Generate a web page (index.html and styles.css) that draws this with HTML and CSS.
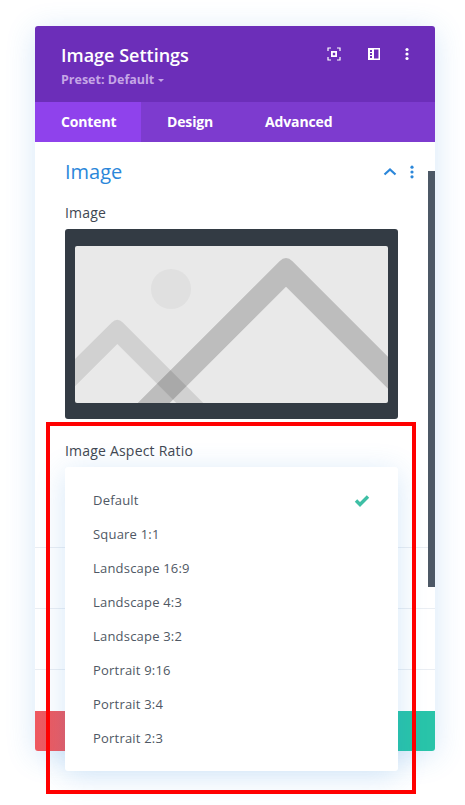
FILE: index.html
```html
<!DOCTYPE html>
<html lang="en">
<head>
<meta charset="utf-8">
<title>Image Settings</title>
<link rel="stylesheet" href="styles.css">
</head>
<body>
<div class="modal">
  <header class="head">
    <div class="head-text">
      <div class="title">Image Settings</div>
      <div class="preset">Preset: Default <span class="caret"></span></div>
    </div>
    <div class="head-icons">
      <svg class="ico" width="14" height="14" viewBox="0 0 14 14"><path d="M1 4V1h3M10 1h3v3M13 10v3h-3M4 13H1v-3" fill="none" stroke="#fff" stroke-width="1.2"/><path fill-rule="evenodd" d="M4 4h6v6H4zM5.800 5.800v2.400h2.400V5.800z" fill="#fff"/></svg>
      <svg class="ico" width="14" height="14" viewBox="0 0 14 14"><path fill-rule="evenodd" d="M1 1h12v12H1zM7 2.500v9h4.500v-9zM3 3v2h2V3zM3 6v2h2V6zM3 9v2h2V9z" fill="#fff"/></svg>
      <svg class="ico ico-more" width="14" height="14" viewBox="0 0 14 14"><circle cx="7" cy="2.500" r="1.600" fill="#fff"/><circle cx="7" cy="7" r="1.600" fill="#fff"/><circle cx="7" cy="11.500" r="1.600" fill="#fff"/></svg>
    </div>
  </header>
  <nav class="tabs">
    <div class="tab active">Content</div>
    <div class="tab">Design</div>
    <div class="tab">Advanced</div>
  </nav>
  <main class="body">
    <div class="scroll"></div>
    <section class="sec sec-image">
      <div class="sec-head">
        <h2 class="sec-title">Image</h2>
        <svg class="chev" width="14" height="10" viewBox="0 0 14 10"><path d="M1.500 7.500 7 2.500l5.500 5" fill="none" stroke="#2b87da" stroke-width="2.200"/></svg>
        <svg class="dots" width="6" height="14" viewBox="0 0 6 14"><circle cx="3" cy="2.200" r="1.600" fill="#2b87da"/><circle cx="3" cy="7" r="1.600" fill="#2b87da"/><circle cx="3" cy="11.800" r="1.600" fill="#2b87da"/></svg>
      </div>
      <div class="label">Image</div>
      <div class="thumb">
        <svg class="pic" width="313" height="157" viewBox="0 0 313 157">
          <rect width="313" height="157" fill="#e9e9e9"/>
          <circle cx="96" cy="43" r="20" fill="#e0e0e0"/>
          <path d="M0 113 36.800 76.500Q42.300 71 47.800 76.500L128.300 157H101.300L42.300 98 0 140.300Z" fill="#000" fill-opacity=".1"/>
          <path d="M62.700 157 204.500 15.200Q211 8.700 217.500 15.200L313 110.700V142.700L211 40.700 94.700 157Z" fill="#000" fill-opacity=".19"/>
        </svg>
      </div>
    </section>
    <section class="sec sec-row"></section>
    <section class="sec sec-row"></section>
    <section class="sec sec-last"></section>
  </main>
  <footer class="foot">
    <div class="btn red"></div>
    <div class="btn gray"></div>
    <div class="btn green"></div>
  </footer>
</div>
<div class="aspect">
  <div class="label aspect-label">Image Aspect Ratio</div>
  <ul class="menu">
    <li class="opt">Default<svg class="check" width="16" height="13" viewBox="0 0 16 13"><path d="M2 6.500 6 10.500 14 2.500" fill="none" stroke="#3ebfa5" stroke-width="3.400"/></svg></li>
    <li class="opt">Square 1:1</li>
    <li class="opt">Landscape 16:9</li>
    <li class="opt">Landscape 4:3</li>
    <li class="opt">Landscape 3:2</li>
    <li class="opt">Portrait 9:16</li>
    <li class="opt">Portrait 3:4</li>
    <li class="opt">Portrait 2:3</li>
  </ul>
</div>
<div class="mark"></div>
</body>
</html>
```

FILE: styles.css
```css
* { box-sizing: border-box; }
html, body { height: 100%; }
body {
  margin: 0;
  background: #fff;
  font-family: "Open Sans", sans-serif;
  position: relative;
  overflow: hidden;
}
.modal {
  position: absolute;
  left: 35px;
  top: 26px;
  width: 400px;
  height: 725px;
  display: flex;
  flex-direction: column;
  border-radius: 3px;
  background: #fff;
  box-shadow: 0 5px 30px rgba(43, 135, 218, .2);
}
.head {
  height: 76px;
  flex: none;
  background: #6c2eb9;
  border-radius: 3px 3px 0 0;
  padding: 17px 20px 0 26px;
  display: flex;
  justify-content: space-between;
}
.title {
  font-size: 18px;
  font-weight: 600;
  line-height: 24px;
  color: #fff;
}
.preset {
  margin-top: 4px;
  font-size: 12.500px;
  font-weight: 700;
  line-height: 18px;
  color: #c5a6e6;
  display: flex;
  align-items: center;
  gap: 4px;
}
.caret {
  width: 0;
  height: 0;
  border: 3px solid transparent;
  border-top: 3px solid #c5a6e6;
  border-bottom: 0;
}
.head-icons {
  display: flex;
  gap: 26px;
  padding-top: 4px;
  padding-right: 1px;
}
.ico-more { margin-left: -7px; }
.tabs {
  height: 40px;
  flex: none;
  display: flex;
  background: #7d3bcf;
}
.tab {
  padding: 0 26px;
  font-size: 14px;
  font-weight: 700;
  letter-spacing: -.15px;
  line-height: 40px;
  color: #fff;
}
.tab.active { background: #8f42ec; width: 106px; }
.body {
  flex: 1;
  position: relative;
  display: flex;
  flex-direction: column;
  min-height: 0;
}
.scroll {
  position: absolute;
  right: 0;
  top: 29px;
  width: 7px;
  height: 416px;
  background: #4c5866;
}
.sec { border-bottom: 1px solid #eaeef3; padding: 0 37px 0 30px; }
.sec-image { height: 406px; padding-top: 16px; }
.sec-row { height: 61px; }
.sec-last { flex: 1; border-bottom: 0; }
.sec-head { display: flex; align-items: center; height: 28px; }
.sec-title {
  margin: 0;
  flex: 1;
  font-size: 20px;
  font-weight: 400;
  line-height: 28px;
  color: #2b87da;
}
.chev { margin-right: 12px; }
.dots { margin-right: -17px; }
.label {
  font-size: 14px;
  font-weight: 500;
  line-height: 20px;
  color: #3f4752;
  letter-spacing: .2px;
}
.sec-head + .label { margin-top: 17px; }
.thumb {
  margin-top: 6px;
  width: 333px;
  height: 190px;
  padding: 17px 10px 16px;
  background: #333b44;
  border-radius: 3px;
}
.pic { display: block; border-radius: 2px; }
.foot {
  height: 40px;
  flex: none;
  display: flex;
  border-radius: 0 0 3px 3px;
  overflow: hidden;
}
.btn { flex: 1; }
.red { background: linear-gradient(90deg, #ef5a60, #dc5d68); }
.gray { background: #fff; }
.green { background: #29c4a9; }
.aspect {
  position: absolute;
  left: 65px;
  top: 441px;
  width: 333px;
}
.menu {
  list-style: none;
  margin: 6px 0 0;
  padding: 16px 0 16px;
  height: 304px;
  background: #fff;
  border-radius: 3px;
  box-shadow: 0 5px 30px rgba(43, 135, 218, .2);
}
.opt {
  height: 34px;
  padding: 0 28px;
  display: flex;
  align-items: center;
  justify-content: space-between;
  font-size: 13px;
  font-weight: 500;
  letter-spacing: .2px;
  color: #4f5864;
}
.mark {
  position: absolute;
  left: 46px;
  top: 422px;
  width: 370px;
  height: 372px;
  border: 4px solid #f00;
}
```
